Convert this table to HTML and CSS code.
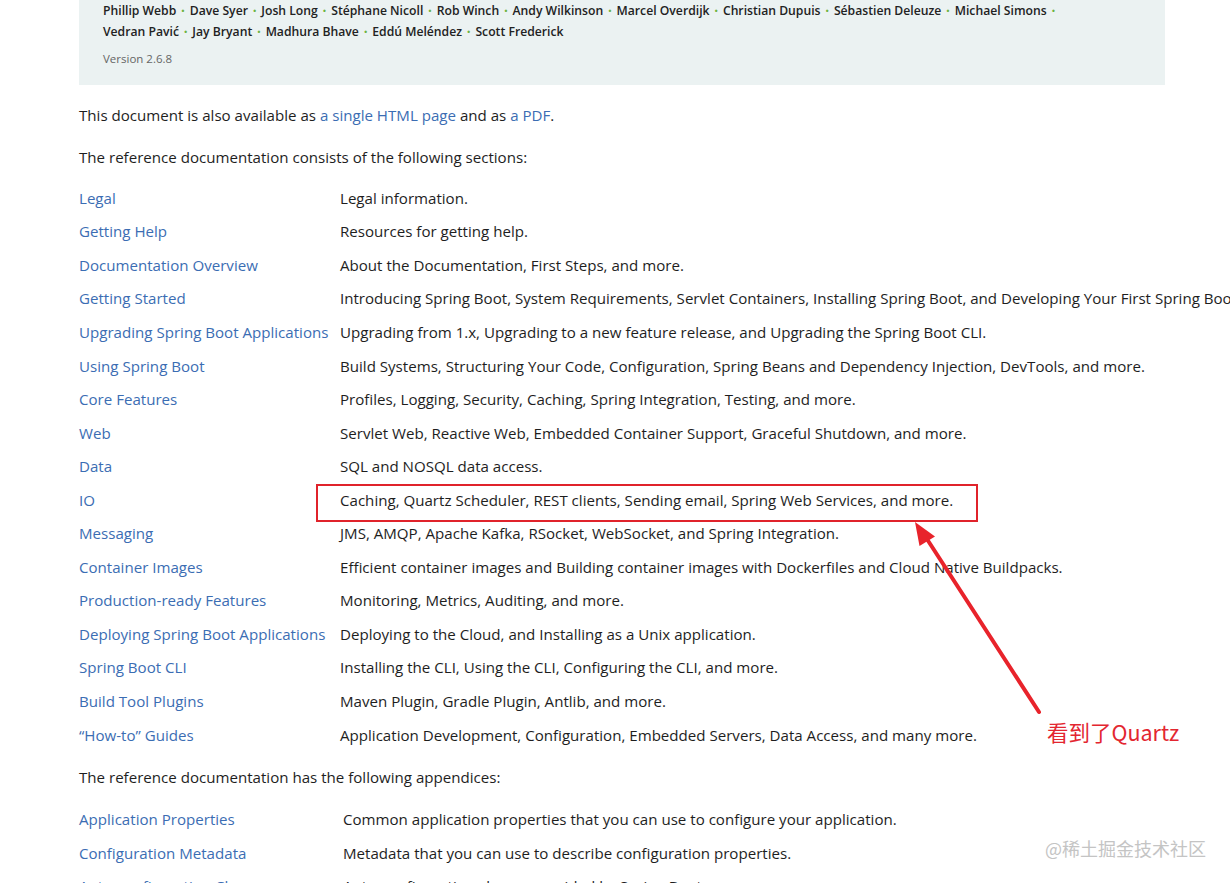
FILE: index.html
```html
<!DOCTYPE html>
<html lang="en">
<head>
<meta charset="utf-8">
<title>Spring Boot Reference Documentation</title>
<link rel="stylesheet" href="styles.css">
</head>
<body>
<div class="page">
  <div class="doc">
    <header class="details">
      <div class="authors">
        <span class="author">Phillip Webb</span><span class="sep">•</span><span class="author">Dave Syer</span><span class="sep">•</span><span class="author">Josh Long</span><span class="sep">•</span><span class="author">Stéphane Nicoll</span><span class="sep">•</span><span class="author">Rob Winch</span><span class="sep">•</span><span class="author">Andy Wilkinson</span><span class="sep">•</span><span class="author">Marcel Overdijk</span><span class="sep">•</span><span class="author">Christian Dupuis</span><span class="sep">•</span><span class="author">Sébastien Deleuze</span><span class="sep">•</span><span class="author">Michael Simons</span><span class="sep">•</span><br>
        <span class="author">Vedran Pavić</span><span class="sep">•</span><span class="author">Jay Bryant</span><span class="sep">•</span><span class="author">Madhura Bhave</span><span class="sep">•</span><span class="author">Eddú Meléndez</span><span class="sep">•</span><span class="author">Scott Frederick</span>
      </div>
      <div class="version">Version 2.6.8</div>
    </header>

    <p class="para">This document is also available as <a href="#">a single HTML page</a> and as <a href="#">a PDF</a>.</p>
    <p class="para">The reference documentation consists of the following sections:</p>

    <table class="sections">
      <tr><td class="name"><a href="#">Legal</a></td><td class="desc">Legal information.</td></tr>
      <tr><td class="name"><a href="#">Getting Help</a></td><td class="desc">Resources for getting help.</td></tr>
      <tr><td class="name"><a href="#">Documentation Overview</a></td><td class="desc">About the Documentation, First Steps, and more.</td></tr>
      <tr><td class="name"><a href="#">Getting Started</a></td><td class="desc">Introducing Spring Boot, System Requirements, Servlet Containers, Installing Spring Boot, and Developing Your First Spring Boot Application.</td></tr>
      <tr><td class="name"><a href="#">Upgrading Spring Boot Applications</a></td><td class="desc">Upgrading from 1.x, Upgrading to a new feature release, and Upgrading the Spring Boot CLI.</td></tr>
      <tr><td class="name"><a href="#">Using Spring Boot</a></td><td class="desc">Build Systems, Structuring Your Code, Configuration, Spring Beans and Dependency Injection, DevTools, and more.</td></tr>
      <tr><td class="name"><a href="#">Core Features</a></td><td class="desc">Profiles, Logging, Security, Caching, Spring Integration, Testing, and more.</td></tr>
      <tr><td class="name"><a href="#">Web</a></td><td class="desc">Servlet Web, Reactive Web, Embedded Container Support, Graceful Shutdown, and more.</td></tr>
      <tr><td class="name"><a href="#">Data</a></td><td class="desc">SQL and NOSQL data access.</td></tr>
      <tr><td class="name"><a href="#">IO</a></td><td class="desc">Caching, Quartz Scheduler, REST clients, Sending email, Spring Web Services, and more.</td></tr>
      <tr><td class="name"><a href="#">Messaging</a></td><td class="desc">JMS, AMQP, Apache Kafka, RSocket, WebSocket, and Spring Integration.</td></tr>
      <tr><td class="name"><a href="#">Container Images</a></td><td class="desc">Efficient container images and Building container images with Dockerfiles and Cloud Native Buildpacks.</td></tr>
      <tr><td class="name"><a href="#">Production-ready Features</a></td><td class="desc">Monitoring, Metrics, Auditing, and more.</td></tr>
      <tr><td class="name"><a href="#">Deploying Spring Boot Applications</a></td><td class="desc">Deploying to the Cloud, and Installing as a Unix application.</td></tr>
      <tr><td class="name"><a href="#">Spring Boot CLI</a></td><td class="desc">Installing the CLI, Using the CLI, Configuring the CLI, and more.</td></tr>
      <tr><td class="name"><a href="#">Build Tool Plugins</a></td><td class="desc">Maven Plugin, Gradle Plugin, Antlib, and more.</td></tr>
      <tr><td class="name"><a href="#">“How-to” Guides</a></td><td class="desc">Application Development, Configuration, Embedded Servers, Data Access, and many more.</td></tr>
    </table>

    <p class="para para-tight">The reference documentation has the following appendices:</p>

    <table class="sections appendices">
      <tr><td class="name"><a href="#">Application Properties</a></td><td class="desc">Common application properties that you can use to configure your application.</td></tr>
      <tr><td class="name"><a href="#">Configuration Metadata</a></td><td class="desc">Metadata that you can use to describe configuration properties.</td></tr>
      <tr><td class="name"><a href="#">Auto-configuration Classes</a></td><td class="desc">Auto-configuration classes provided by Spring Boot.</td></tr>
    </table>
  </div>

  <svg class="annotation" width="1230" height="883" viewBox="0 0 1230 883" aria-hidden="true">
    <rect x="317" y="485" width="660" height="36" fill="none" stroke="#e0232b" stroke-width="2"/>
    <line x1="1039" y1="712" x2="925" y2="536" stroke="#e8232b" stroke-width="4" stroke-linecap="round"/>
    <polygon points="915,522 919.5,546 935,536.5" fill="#e8232b"/>
  </svg>
  <div class="note">看到了Quartz</div>
  <div class="watermark">@稀土掘金技术社区</div>
</div>
</body>
</html>
```

FILE: styles.css
```css
html, body {
  margin: 0;
  padding: 0;
  background: #ffffff;
}

body {
  overflow: hidden;
  font-family: "Open Sans", "Noto Sans", sans-serif;
  color: #1e1e1e;
}

.page {
  position: relative;
  width: 1230px;
  height: 883px;
  overflow: hidden;
}

.doc {
  padding-left: 79px;
}

.details {
  width: 1086px;
  box-sizing: border-box;
  background: #ebf2f2;
  padding: 0 24px 17px;
}

.authors {
  font-size: 12.2px;
  line-height: 21px;
  font-weight: 600;
  color: #222;
  white-space: nowrap;
}

.sep {
  color: #6db33f;
  font-size: 9px;
  margin: 0 5px;
  vertical-align: 1px;
}

.version {
  margin-top: 8px;
  font-size: 11.5px;
  line-height: 18px;
  color: #666;
  font-weight: 400;
}

.para {
  margin: 18px 0 0;
  font-size: 15.1px;
  line-height: 24px;
  white-space: nowrap;
}

.para-tight {
  margin-top: 14px;
}

a {
  color: #3b6db3;
  text-decoration: none;
}

.sections {
  border-collapse: collapse;
  margin-top: 12px;
  font-size: 15.1px;
  white-space: nowrap;
}

.sections td {
  padding: 0;
  height: 33.55px;
  line-height: 24px;
  vertical-align: middle;
}

.sections .name {
  width: 261px;
  min-width: 261px;
  max-width: 261px;
}

.appendices {
  margin-top: 13px;
}

.appendices .name {
  width: 264px;
  min-width: 264px;
  max-width: 264px;
}

.annotation {
  position: absolute;
  left: 0;
  top: 0;
  pointer-events: none;
}

.note {
  position: absolute;
  left: 1047px;
  top: 717px;
  font-family: "Noto Sans CJK SC", "Noto Sans", sans-serif;
  font-size: 21.5px;
  line-height: 30px;
  color: #e32630;
  white-space: nowrap;
}

.watermark {
  position: absolute;
  left: 1045px;
  top: 836px;
  font-family: "Noto Sans CJK SC", sans-serif;
  font-size: 18px;
  line-height: 24px;
  color: #c4c4c4;
  white-space: nowrap;
}
```
